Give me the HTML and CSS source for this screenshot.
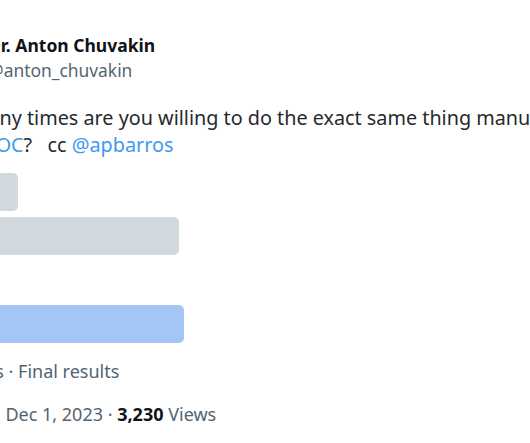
FILE: index.html
```html
<!DOCTYPE html>
<html lang="en">
<head>
  <meta charset="UTF-8" />
  <title>Dr. Anton Chuvakin on X</title>
  <meta name="viewport" content="width=device-width, initial-scale=1.0" />
  <link rel="stylesheet" href="styles.css">
</head>
<body>
<article class="tweet">
  <header class="tweet-head">
    <div class="avatar"></div>
    <div class="who">
      <div class="name">Dr. Anton Chuvakin</div>
      <div class="handle">@anton_chuvakin</div>
    </div>
  </header>
  <p class="tweet-text">How many times are you willing to do the exact same thing manually<br>
    to our S<a href="#">OC</a>?&nbsp;&nbsp; cc <a href="#">@apbarros</a></p>
  <div class="poll">
    <div class="choice"><div class="bar" style="width: 95px"></div><span>1</span></div>
    <div class="choice"><div class="bar" style="width: 256px"></div><span>2-3</span></div>
    <div class="choice"><div class="bar" style="width: 4px"></div><span>4-10</span></div>
    <div class="choice winner"><div class="bar" style="width: 261px"></div><span>Never</span></div>
  </div>
  <div class="poll-meta">412 votes · Final results</div>
  <div class="tweet-meta">2:23 AM · Dec 1, 2023 · <b>3,230</b> Views</div>
</article>
</body>
</html>
```

FILE: styles.css
```css
html, body {
  margin: 0;
  padding: 0;
  background: #fff;
  overflow: hidden;
  height: 100vh;
  width: 100vw;
}
.tweet {
  margin-left: -77px;
  width: 760px;
  padding-top: 33px;
  font-family: "Noto Sans", "Open Sans", sans-serif;
  color: #0f1419;
}
.tweet-head {
  display: flex;
  align-items: center;
  gap: 15px;
}
.avatar {
  width: 50px;
  height: 50px;
  border-radius: 50%;
  background: #8a9aa8;
  flex: none;
}
.name {
  font-size: 17.5px;
  font-weight: 700;
  line-height: 25px;
}
.handle {
  font-size: 17.4px;
  color: #536471;
  line-height: 25px;
}
.tweet-text {
  margin: 21px 0 0 0;
  font-size: 19.8px;
  line-height: 27px;
  white-space: nowrap;
  color: #26292d;
}
.tweet-text a {
  color: #3d9af0;
  text-decoration: none;
}
.poll {
  margin-top: 15px;
  display: flex;
  flex-direction: column;
  gap: 6px;
  width: 640px;
}
.choice {
  position: relative;
  height: 38px;
}
.choice .bar {
  height: 38px;
  border-radius: 5px;
  background: #cfd9de;
}
.choice.winner .bar {
  background: #a3c6f4;
}
.choice span {
  position: absolute;
  left: 12px;
  top: 8px;
  font-size: 18px;
  font-weight: 700;
}
.poll-meta {
  margin-top: 16px;
  font-size: 18px;
  line-height: 25px;
  color: #536471;
}
.tweet-meta {
  margin-top: 18px;
  font-size: 18px;
  line-height: 25px;
  color: #536471;
}
.tweet-meta b {
  color: #0f1419;
}
```
